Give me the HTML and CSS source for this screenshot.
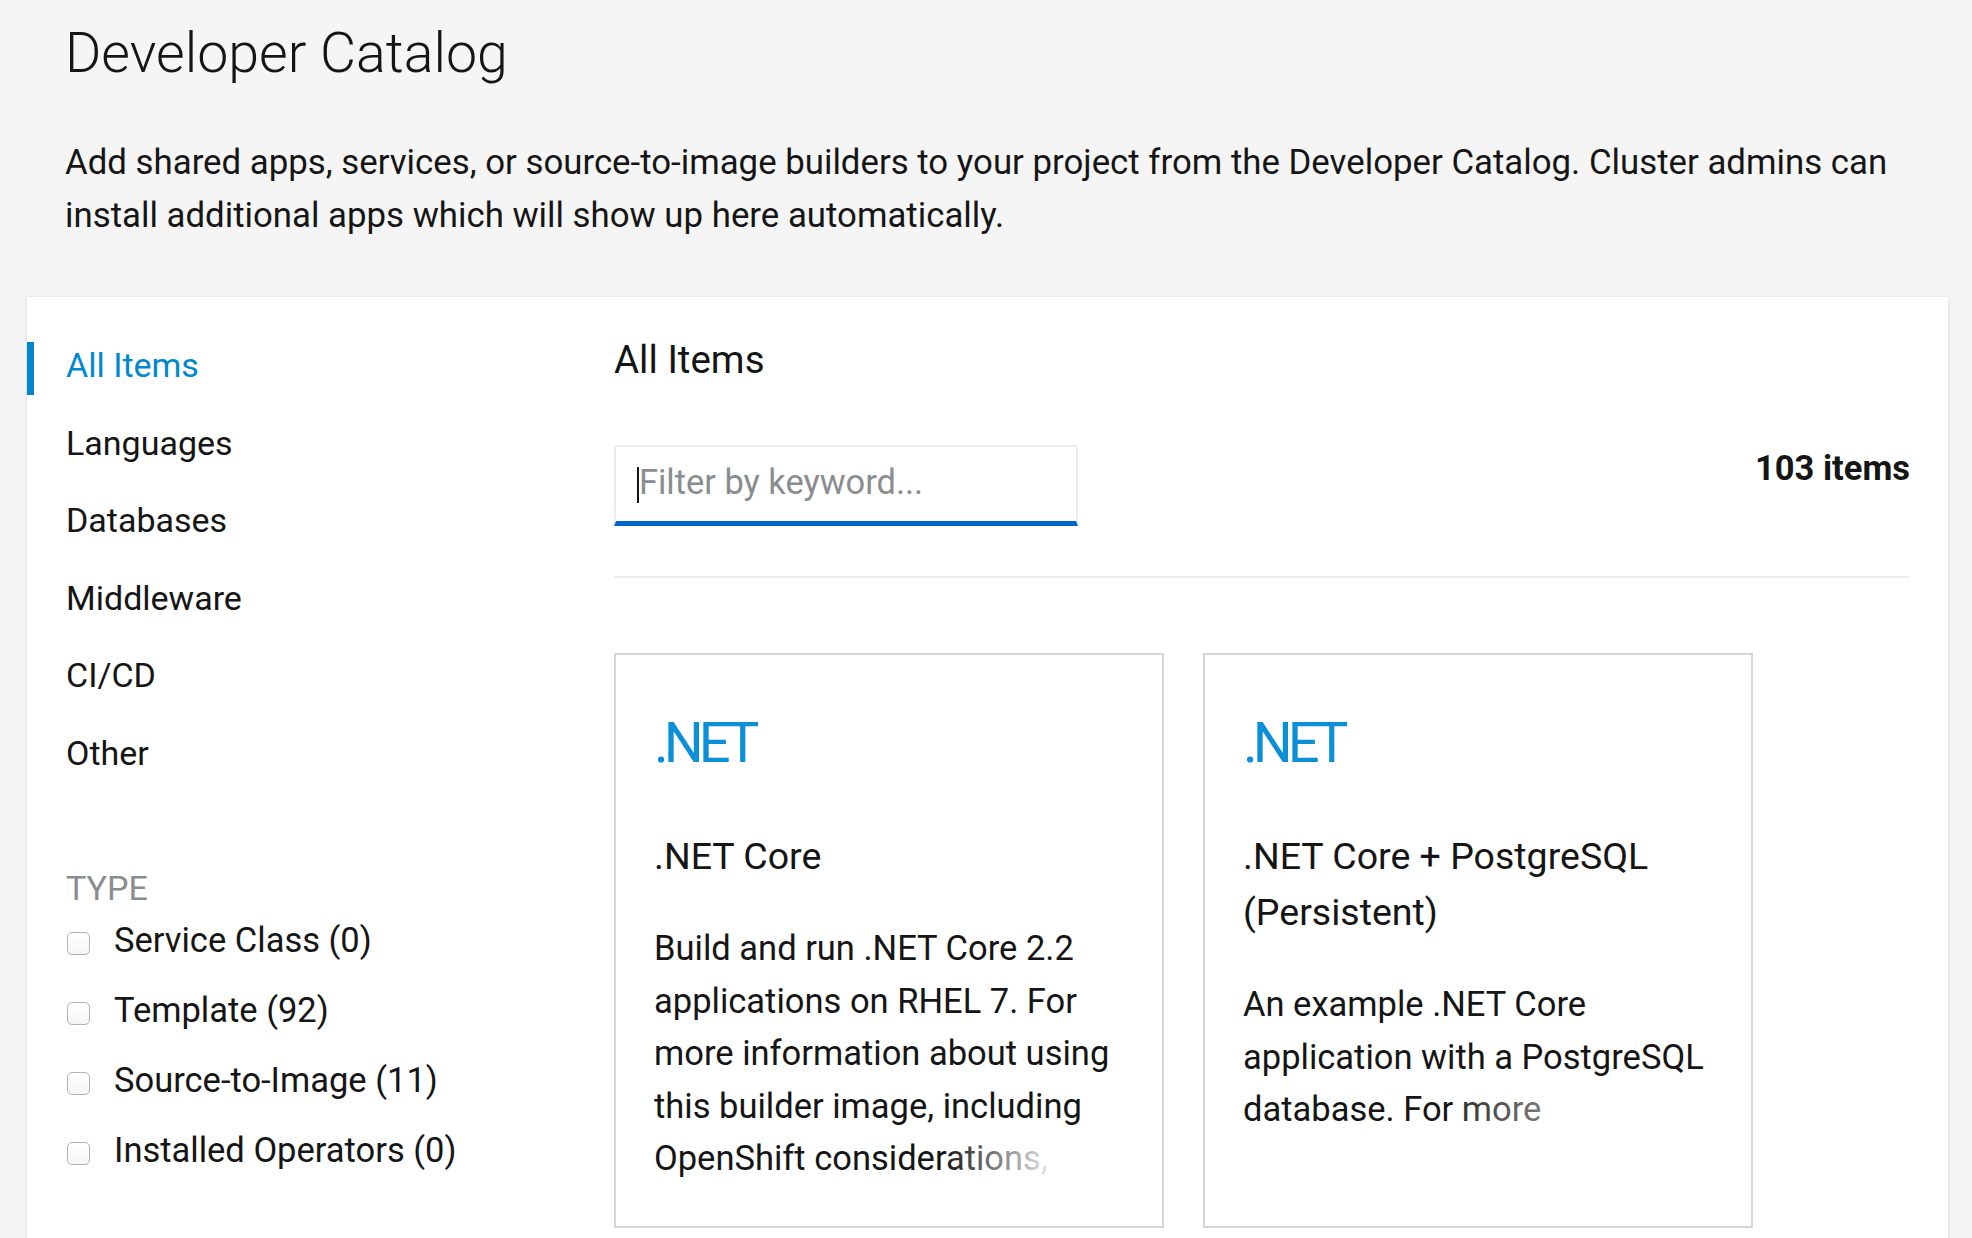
FILE: index.html
```html
<!DOCTYPE html>
<html lang="en">
<head>
<meta charset="utf-8">
<title>Developer Catalog</title>
<link rel="stylesheet" href="styles.css">
</head>
<body>
<div class="page">
  <header class="page-head">
    <h1 class="page-title">Developer Catalog</h1>
    <p class="page-lead">Add shared apps, services, or source-to-image builders to your project from the Developer Catalog. Cluster admins can install additional apps which will show up here automatically.</p>
  </header>
  <main class="catalog">
    <aside class="sidebar">
      <ul class="cat-list">
        <li class="cat-item is-active">All Items</li>
        <li class="cat-item">Languages</li>
        <li class="cat-item">Databases</li>
        <li class="cat-item">Middleware</li>
        <li class="cat-item">CI/CD</li>
        <li class="cat-item">Other</li>
      </ul>
      <div class="filter-group">
        <div class="filter-title">TYPE</div>
        <label class="check"><span class="check-box"></span><span>Service Class (0)</span></label>
        <label class="check"><span class="check-box"></span><span>Template (92)</span></label>
        <label class="check"><span class="check-box"></span><span>Source-to-Image (11)</span></label>
        <label class="check"><span class="check-box"></span><span>Installed Operators (0)</span></label>
      </div>
    </aside>
    <section class="content">
      <h2 class="content-title">All Items</h2>
      <div class="toolbar">
        <div class="filter-input"><input type="text" placeholder="Filter by keyword..."></div>
        <div class="count">103 items</div>
      </div>
      <div class="tiles">
        <article class="tile">
          <div class="tile-logo">.NET</div>
          <h3 class="tile-title">.NET Core</h3>
          <p class="tile-desc tile-desc--5">Build and run .NET Core 2.2 applications on RHEL 7. For more information about using this builder image, including OpenShift considerations,</p>
        </article>
        <article class="tile">
          <div class="tile-logo">.NET</div>
          <h3 class="tile-title">.NET Core + PostgreSQL (Persistent)</h3>
          <p class="tile-desc tile-desc--3">An example .NET Core application with a PostgreSQL database. For more</p>
        </article>
      </div>
    </section>
  </main>
</div>
</body>
</html>
```

FILE: styles.css
```css
* { box-sizing: border-box; }
html, body { margin: 0; padding: 0; }
body {
  background: #f5f5f5;
  color: #151515;
  font-family: Roboto, "Open Sans", "Liberation Sans", sans-serif;
}
.page-head { padding: 22px 27px 0 65px; }
.page-title { margin: 0; font-size: 55.5px; font-weight: 300; line-height: 64px; }
.page-lead { margin: 50px 0 0; font-size: 34.8px; line-height: 52.5px; }

.catalog {
  display: flex;
  margin: 56px 24px 0 27px;
  background: #fff;
  box-shadow: 0 1px 3px rgba(3, 3, 3, 0.12), 0 0 2px rgba(3, 3, 3, 0.06);
  min-height: 1000px;
}
.sidebar { width: 587px; flex: none; padding-top: 45px; }
.cat-list { list-style: none; margin: 0; padding: 0; }
.cat-item {
  font-size: 34px;
  line-height: 46px;
  padding: 0 0 6.5px 39px;
  margin-bottom: 25px;
}
.cat-item.is-active {
  color: #0088ce;
  border-left: 7px solid #0088ce;
  padding-left: 32px;
}
.filter-group { padding-top: 58px; padding-left: 39px; }
.filter-title { font-size: 34px; line-height: 46px; color: #8a8d90; margin-bottom: 6px; }
.check {
  display: flex;
  align-items: flex-start;
  font-size: 34.5px;
  line-height: 46px;
  margin-bottom: 24px;
}
.check-box {
  flex: none;
  width: 23px;
  height: 23px;
  margin: 15px 24px 0 1px;
  border: 1.5px solid #b3b3b3;
  border-radius: 5px;
  background: linear-gradient(#ffffff, #f5f5f5);
}

.content { flex: 1; min-width: 0; padding: 41px 38px 40px 0; }
.content-title { margin: 0; font-size: 38.5px; font-weight: 400; line-height: 44px; }
.toolbar {
  display: flex;
  justify-content: space-between;
  align-items: flex-start;
  margin-top: 63px;
  padding-bottom: 50px;
  border-bottom: 2px solid #ededed;
}
.filter-input { position: relative; width: 464px; }
.filter-input input {
  display: block;
  width: 100%;
  height: 81px;
  margin: 0;
  border: 2px solid #ededed;
  border-bottom: 5px solid #0066cc;
  border-radius: 0;
  padding: 0 23px 4px;
  font-family: inherit;
  font-size: 34.4px;
  color: #151515;
  background: #fff;
  outline: none;
}
.filter-input input::placeholder { color: #8a8d90; }
.filter-input::before {
  content: "";
  position: absolute;
  left: 23px;
  top: 22px;
  width: 2px;
  height: 36px;
  background: #151515;
}
.count { font-size: 34.5px; font-weight: 700; line-height: 46px; }

.tiles {
  display: grid;
  grid-template-columns: repeat(auto-fill, 550px);
  gap: 39px;
  margin-top: 75px;
}
.tile {
  height: 575px;
  border: 2px solid #d6d6d6;
  padding: 61px 20px 0 38px;
  overflow: hidden;
  background: #fff;
}
.tile-logo {
  height: 55px;
  font-size: 56px;
  line-height: 55px;
  color: #0b8fd6;
  letter-spacing: -5px;
}
.tile-title { margin: 57px 0 0; font-size: 37.5px; font-weight: 400; line-height: 56px; }
.tile-desc {
  position: relative;
  margin: 38px 0 0;
  font-size: 34.5px;
  line-height: 52.5px;
  overflow: hidden;
}
.tile-desc::after {
  content: "";
  position: absolute;
  right: 0;
  bottom: 0;
  height: 52.5px;
}
.tile-desc--5 { max-height: 262.5px; }
.tile-desc--5::after {
  left: 290px;
  background: linear-gradient(to right, rgba(255, 255, 255, 0), #fff 118px);
}
.tile-desc--3 { max-height: 157.5px; }
.tile-desc--3::after {
  left: 218px;
  background: linear-gradient(to right, rgba(255, 255, 255, 0.12), rgba(255, 255, 255, 0.45) 85px, rgba(255, 255, 255, 0.45));
}
```
